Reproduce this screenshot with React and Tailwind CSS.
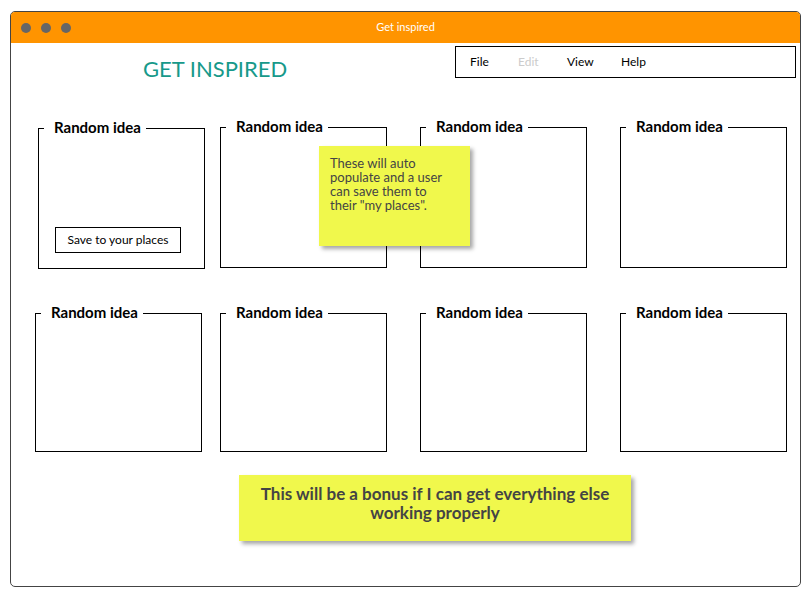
import React from "react";

const font = { fontFamily: '"Source Sans Pro", Lato, "Noto Sans", sans-serif' };

function IdeaCard({ className, children }) {
  return (
    <div className={"relative border border-black bg-white w-[167px] " + className}>
      <span className="absolute left-[5px] top-[-12px] bg-white pl-[10px] pr-[5px] text-[15px] font-bold leading-[20px] text-black">
        Random idea
      </span>
      {children}
    </div>
  );
}

export default function App() {
  return (
    <div className="w-[811px] h-[608px] bg-white" style={font}>
      <div className="absolute left-[10px] top-[11px] w-[791px] h-[576px] border border-[#444] rounded-[5px] overflow-hidden bg-white">
        {/* title bar */}
        <div className="relative h-[31px] bg-[#ff9400] flex items-center pl-[10px] gap-[10px]">
          <span className="w-[10px] h-[10px] rounded-full bg-[#666]"></span>
          <span className="w-[10px] h-[10px] rounded-full bg-[#666]"></span>
          <span className="w-[10px] h-[10px] rounded-full bg-[#666]"></span>
          <span className="absolute left-0 right-0 text-center text-[11px] text-white">Get inspired</span>
        </div>

        <div className="relative">
          {/* header */}
          <div className="flex items-start h-[35px]">
            <div className="ml-[132px] mt-[15px] text-[22px] leading-[22px] text-[#17998a]">GET INSPIRED</div>
            <div className="ml-auto mt-[3px] mr-[4px] w-[341px] h-[32px] border border-black flex items-center pl-[14px] text-[12px] text-black">
              <span className="w-[48px]">File</span>
              <span className="w-[49px] text-[#ccc]">Edit</span>
              <span className="w-[54px]">View</span>
              <span>Help</span>
            </div>
          </div>

          {/* row 1 */}
          <div className="flex items-start mt-[49px]">
            <IdeaCard className="ml-[27px] mt-[1px] h-[141px]">
              <button className="absolute left-[16px] top-[98px] w-[126px] h-[26px] border border-black bg-white text-[12px] text-black">
                Save to your places
              </button>
            </IdeaCard>
            <IdeaCard className="ml-[15px] h-[141px]" />
            <IdeaCard className="ml-[33px] h-[141px]" />
            <IdeaCard className="ml-[33px] h-[141px]" />
          </div>

          {/* row 2 */}
          <div className="flex items-start mt-[44px]">
            <IdeaCard className="ml-[24px] h-[139px]" />
            <IdeaCard className="ml-[18px] h-[139px]" />
            <IdeaCard className="ml-[33px] h-[139px]" />
            <IdeaCard className="ml-[33px] h-[139px]" />
          </div>

          <div className="ml-[228px] mt-[23px] w-[392px] h-[66px] bg-[#f0f84c] shadow-[3px_3px_4px_rgba(0,0,0,0.35)] pt-[9px] text-center text-[17px] font-bold leading-[19px] text-[#444] px-[10px]">
            This will be a bonus if I can get everything else working properly
          </div>

          {/* sticky note */}
          <div className="absolute left-[308px] top-[103px] w-[151px] h-[100px] bg-[#f0f84c] shadow-[3px_3px_4px_rgba(0,0,0,0.35)] pl-[11px] pr-[20px] pt-[10px] text-[13px] leading-[14px] text-[#444]">
            These will auto populate and a user can save them to their "my places".
          </div>
        </div>
      </div>
    </div>
  );
}
